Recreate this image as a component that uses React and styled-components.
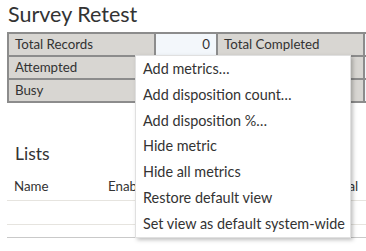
import React from 'react';
import styled, { createGlobalStyle } from 'styled-components';

const GlobalStyle = createGlobalStyle`
    html, body {
        margin: 0;
        padding: 0;
        background: #ffffff;
        overflow: hidden;
    }
    body {
        font-family: Lato, "Liberation Sans", sans-serif;
        color: #333333;
    }
`;

const Page = styled.div`
    position: relative;
    width: 366px;
    height: 251px;
    overflow: hidden;
    padding: 0 0 0 7px;
    box-sizing: border-box;
`;

const Title = styled.h1`
    margin: 0;
    padding: 1px 0 0 1px;
    height: 32px;
    box-sizing: border-box;
    font-size: 21.5px;
    font-weight: 400;
    color: #333333;
    line-height: 26px;
`;

const MetricTable = styled.div`
    display: grid;
    grid-template-columns: 147px 62px 147px 40px;
    width: 400px;
    border-top: 2px solid #8c8c8c;
    border-left: 2px solid #8c8c8c;
    box-sizing: border-box;
`;

const Cell = styled.div`
    height: 23px;
    box-sizing: border-box;
    border-right: 2px solid #8c8c8c;
    border-bottom: 2px solid #8c8c8c;
    background: ${({ value }) => (value ? '#f3f7fb' : '#d8d6d2')};
    padding: 0 ${({ value }) => (value ? '6px' : '0')} 0 ${({ value }) => (value ? '0' : '6px')};
    font-size: 13.3px;
    line-height: 21px;
    text-align: ${({ value }) => (value ? 'right' : 'left')};
    color: #333333;
    white-space: nowrap;
    overflow: hidden;
`;

const Lists = styled.section`
    margin-top: 40px;
`;

const ListsTitle = styled.h2`
    margin: 0 0 0 8px;
    font-size: 17.5px;
    font-weight: 400;
    line-height: 21px;
    color: #333333;
`;

const ListHead = styled.div`
    display: grid;
    grid-template-columns: 94px 222px 40px;
    margin-top: 12px;
    height: 25px;
    padding-left: 7px;
    box-sizing: border-box;
    border-bottom: 1px solid #e6e4df;
    font-size: 13.3px;
    line-height: 20px;
    color: #333333;
    white-space: nowrap;
    overflow: hidden;
`;

const ListRow = styled.div`
    height: 24px;
    box-sizing: border-box;
    border-bottom: 1px solid #e6e4df;
`;

const ListFoot = styled.div`
    height: 13px;
    box-sizing: border-box;
    border-bottom: 1px solid #c9c9c9;
`;

const Menu = styled.ul`
    position: absolute;
    left: 135px;
    top: 55px;
    width: 216px;
    height: 183px;
    margin: 0;
    padding: 0;
    list-style: none;
    background: #ffffff;
    border: 1px solid #e0e0e0;
    box-shadow: 2px 2px 4px rgba(0, 0, 0, 0.25);
    box-sizing: border-box;
`;

const MenuItem = styled.li`
    height: 25.8px;
    padding-left: 7px;
    font-size: 14.4px;
    line-height: 26px;
    color: #333333;
    white-space: nowrap;
    cursor: pointer;
`;

const metrics = [
    ['Total Records', '0', 'Total Completed'],
    ['Attempted', '', ''],
    ['Busy', '', '']
];

const menuItems = [
    'Add metrics\u2026',
    'Add disposition count\u2026',
    'Add disposition %\u2026',
    'Hide metric',
    'Hide all metrics',
    'Restore default view',
    'Set view as default system-wide'
];

export default function App() {
    return (
        <Page>
            <GlobalStyle />
            <Title>Survey Retest</Title>
            <MetricTable>
                {metrics.map(([label, value, label2]) => (
                    <React.Fragment key={label}>
                        <Cell>{label}</Cell>
                        <Cell value>{value}</Cell>
                        <Cell>{label2}</Cell>
                        <Cell value />
                    </React.Fragment>
                ))}
            </MetricTable>
            <Lists>
                <ListsTitle>Lists</ListsTitle>
                <ListHead>
                    <span>Name</span>
                    <span>Enabled</span>
                    <span>Total</span>
                </ListHead>
                <ListRow />
                <ListFoot />
            </Lists>
            <Menu>
                {menuItems.map((item) => (
                    <MenuItem key={item}>{item}</MenuItem>
                ))}
            </Menu>
        </Page>
    );
}
